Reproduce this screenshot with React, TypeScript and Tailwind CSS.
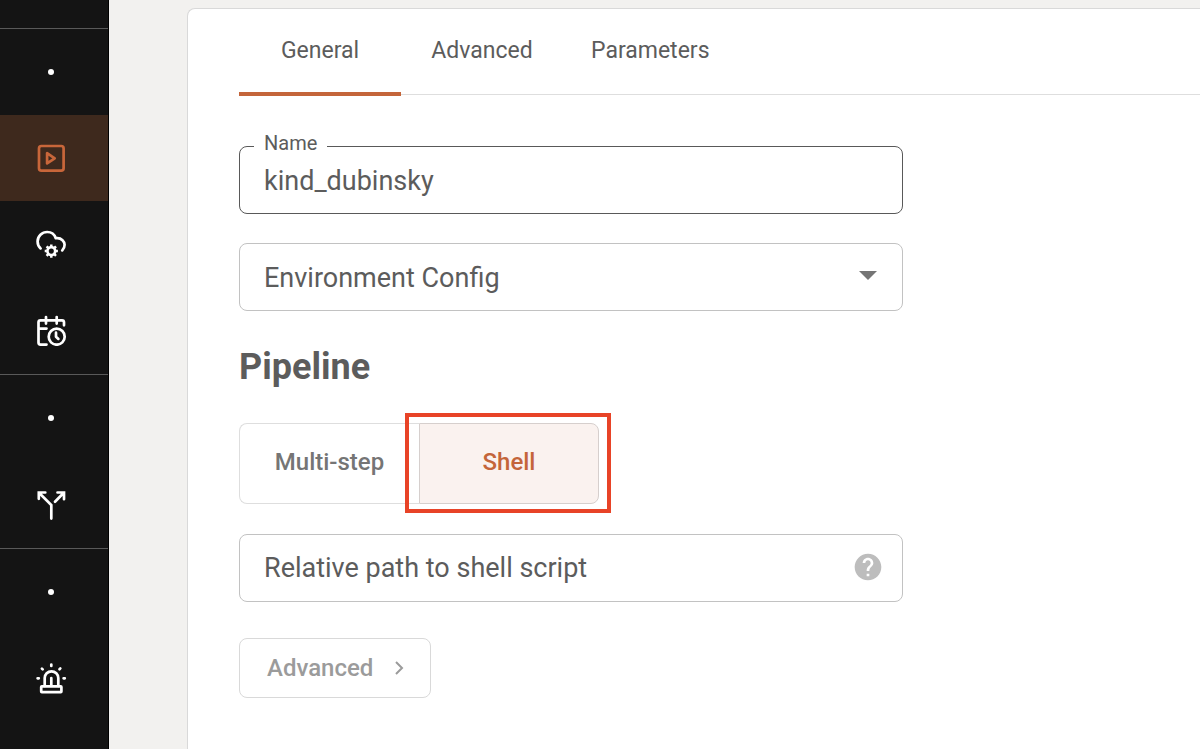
import { useState } from "react";
import type { ReactNode } from "react";

function Icon({ viewBox = "0 0 32 32", children }: { viewBox?: string; children: ReactNode }) {
  return (
    <svg
      viewBox={viewBox}
      className="size-8"
      fill="none"
      stroke="currentColor"
      strokeWidth="2.7"
      strokeLinecap="round"
      strokeLinejoin="round"
      aria-hidden="true"
    >
      {children}
    </svg>
  );
}

const PlayIcon = () => (
  <Icon>
    <rect x="4" y="4" width="24.6" height="24.6" rx="2.4" />
    <path d="M12.1 11.2v10.2l7.6-5.1z" />
  </Icon>
);

const CloudGearIcon = () => (
  <Icon viewBox="0 -0.4 32 32">
    <path d="M5.6 20C3.6 18.2 2.6 15.6 2.6 13c0-5.2 4.4-9.4 9.6-9.4 4.2 0 7.4 2.6 8.6 6.2h1.6c4 0 7.2 3 7.2 6.6 0 2.2-.8 4.200-2.4 5.600" />
    <circle cx="16.3" cy="22.7" r="3.9" />
    <g strokeLinecap="butt" strokeWidth="2.5">
      <path d="M16.3 16.100v2M16.3 27.300v2M9.700 22.700h2M20.900 22.700h2M11.600 18l1.600 1.600M19.400 25.800l1.600 1.600M21 18l-1.600 1.600M13.200 25.800l-1.600 1.600" />
    </g>
  </Icon>
);

const CalendarClockIcon = () => (
  <Icon viewBox="0 -1 32 32">
    <path d="M29 10.3v-3a2 2 0 0 0-2-2H5.500a2 2 0 0 0-2 2v20.300a2 2 0 0 0 2 2h6M3.500 13.600h8M11 2v6.600M21.700 2v6.600" />
    <circle cx="21.700" cy="21.700" r="8" />
    <path d="M21 17.700v4l2.400 2.200" />
  </Icon>
);

const SplitIcon = () => (
  <Icon viewBox="0 -1 32 32">
    <g strokeLinejoin="miter">
      <path d="M10.300 3.500H3.800v6.300M4.500 4.200l11.800 11.900V29.600" />
      <path d="M22.500 3.500H29v6.700M28.300 4.200l-8.300 8.500" />
    </g>
  </Icon>
);

const SirenIcon = () => (
  <Icon viewBox="0 -1 32 32">
    <rect x="6.200" y="23.300" width="20.200" height="5.900" rx="0.600" />
    <path d="M9.700 22.900V15.100a6.800 6.800 0 0 1 13.600 0v7.800M16.300 15v7M16.300 1.600v1.300M2.600 15.300h1.200M28.600 15.300h1.200M6.900 5.600l.8.800M25.300 5.400l-.8.800" />
  </Icon>
);

function Dot() {
  return (
    <div className="flex h-[86px] items-center justify-center pr-1.5">
      <span className="size-1.5 rounded-full bg-white" />
    </div>
  );
}

function NavItem({ label, active, children }: { label: string; active?: boolean; children: ReactNode }) {
  return (
    <a
      href="#"
      aria-label={label}
      aria-current={active ? "page" : undefined}
      className={
        "flex h-[86px] items-center justify-center pr-1.5 " +
        (active ? "bg-[#3e291d] text-[#c8663a]" : "text-white")
      }
    >
      {children}
    </a>
  );
}

const tabs = ["General", "Advanced", "Parameters"];

export default function App() {
  const [tab, setTab] = useState("General");
  const [mode, setMode] = useState("Shell");

  return (
    <div className="flex min-h-screen bg-[#f2f1ef] font-[Roboto,sans-serif] text-[#5c5c5c]">
      <nav className="w-[109px] shrink-0 border-r border-black bg-[#141414] pt-7">
        <div className="border-t border-[#595959] pb-px">
          <Dot />
          <NavItem label="Jobs" active>
            <PlayIcon />
          </NavItem>
          <NavItem label="Environments">
            <CloudGearIcon />
          </NavItem>
          <NavItem label="Schedules">
            <CalendarClockIcon />
          </NavItem>
        </div>
        <div className="border-t border-[#595959] pb-px">
          <Dot />
          <NavItem label="Routing">
            <SplitIcon />
          </NavItem>
        </div>
        <div className="border-t border-[#595959]">
          <Dot />
          <NavItem label="Alerts">
            <SirenIcon />
          </NavItem>
        </div>
      </nav>

      <main className="flex min-w-0 flex-1 pt-2 pl-[78px]">
        <section className="min-w-0 flex-1 rounded-tl-lg border-t border-l border-[#d9d9d9] bg-white pb-12 pl-[51px]">
          <div role="tablist" className="flex border-b border-[#dedede]">
            {tabs.map((name) => (
              <button
                key={name}
                type="button"
                role="tab"
                aria-selected={tab === name}
                onClick={() => setTab(name)}
                className="relative h-[85px] min-w-[162px] px-7 text-[23px]"
              >
                {name}
                {tab === name && <span className="absolute inset-x-0 -bottom-0.5 h-1 bg-[#c4653a]" />}
              </button>
            ))}
          </div>

          <form className="flex max-w-[664px] flex-col pt-[51px]">
            <div className="relative">
              <label htmlFor="name" className="absolute -top-[15px] left-[15px] bg-white px-2.5 text-xl leading-6">
                Name
              </label>
              <input
                id="name"
                type="text"
                defaultValue="kind_dubinsky"
                className="block h-[68px] w-full rounded-lg border border-[#595959] bg-white px-6 pt-0.5 text-[27px] outline-none"
              />
            </div>

            <div className="relative mt-[29px]">
              <select
                aria-label="Environment Config"
                className="block h-[68px] w-full appearance-none rounded-lg border border-[#c2c2c2] bg-white px-6 pt-0.5 text-[27px] outline-none"
              >
                <option>Environment Config</option>
              </select>
              <svg
                viewBox="0 0 18 9"
                className="pointer-events-none absolute top-7 right-[26px] h-[9px] w-[18px] fill-[#757575]"
                aria-hidden="true"
              >
                <path d="M0 0h18L9 9z" />
              </svg>
            </div>

            <h2 className="mt-9 text-4xl leading-10 font-bold">Pipeline</h2>

            <div className="mt-9 grid h-[81px] w-[360px] grid-cols-2 text-2xl font-medium">
              <button
                type="button"
                aria-pressed={mode === "Multi-step"}
                onClick={() => setMode("Multi-step")}
                className="rounded-l-lg border border-r-0 border-[#dedede] pb-1 text-[#757575]"
              >
                Multi-step
              </button>
              <div className="relative flex">
                <button
                  type="button"
                  aria-pressed={mode === "Shell"}
                  onClick={() => setMode("Shell")}
                  className="flex-1 rounded-r-lg border border-[#d6cfcd] bg-[#faf2ef] pb-1 text-[#c4653a]"
                >
                  Shell
                </button>
                <span className="pointer-events-none absolute -top-2.5 -right-3 -bottom-[9px] -left-3.5 border-4 border-[#e84327]" />
              </div>
            </div>

            <div className="relative mt-[30px]">
              <input
                type="text"
                aria-label="Relative path to shell script"
                placeholder="Relative path to shell script"
                className="block h-[68px] w-full rounded-lg border border-[#c2c2c2] bg-white pr-16 pl-6 text-[27px] outline-none placeholder:text-[#5c5c5c]"
              />
              <button type="button" aria-label="Help" className="absolute top-[17px] right-[19px] text-[#bdbdbd]">
                <svg viewBox="0 0 24 24" className="size-8 fill-current" aria-hidden="true">
                  <path d="M12 2C6.480 2 2 6.480 2 12s4.480 10 10 10 10-4.480 10-10S17.520 2 12 2zm1 17h-2v-2h2v2zm2.070-7.750-.9.920C13.450 12.900 13 13.500 13 15h-2v-.5c0-1.100.45-2.100 1.170-2.830l1.240-1.260c.37-.36.59-.86.59-1.410 0-1.100-.9-2-2-2s-2 .9-2 2H8c0-2.210 1.790-4 4-4s4 1.790 4 4c0 .88-.36 1.680-.93 2.250z" />
                </svg>
              </button>
            </div>

            <button
              type="button"
              className="mt-9 flex h-[60px] w-48 items-center justify-between rounded-lg border border-[#d9d9d9] pr-[26px] pl-[27px] text-2xl font-medium text-[#9b9b9b]"
            >
              Advanced
              <svg
                viewBox="0 0 10 14"
                className="h-3.5 w-2.5"
                fill="none"
                stroke="currentColor"
                strokeWidth="2"
                aria-hidden="true"
              >
                <path d="M2 1l6 6-6 6" />
              </svg>
            </button>
          </form>
        </section>
      </main>
    </div>
  );
}
